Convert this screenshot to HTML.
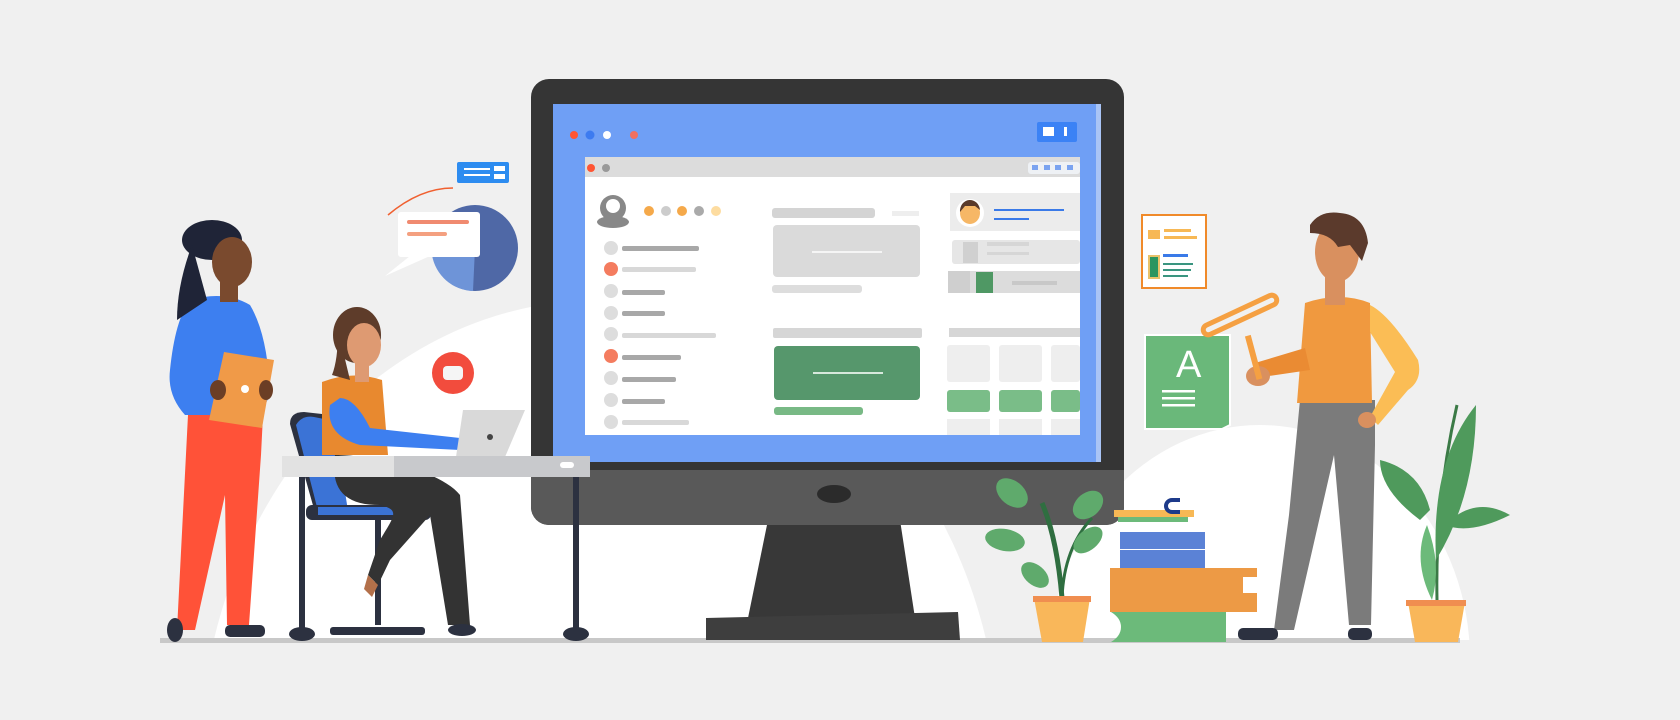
<!DOCTYPE html><html><head><style>html,body{margin:0;padding:0;background:#f0f0f0;width:1680px;height:720px;overflow:hidden}svg{display:block}</style></head><body>
<svg width="1680" height="720" viewBox="0 0 1680 720" xmlns="http://www.w3.org/2000/svg">
<defs><clipPath id="fl"><rect x="0" y="0" width="1680" height="640"/></clipPath></defs>
<rect width="1680" height="720" fill="#f0f0f0"/>
<g clip-path="url(#fl)">
<ellipse cx="600" cy="760" rx="400" ry="460" fill="#fff"/>
<ellipse cx="1260" cy="660" rx="210" ry="235" fill="#fff"/>
</g>
<!-- floor -->
<rect x="160" y="638" width="1300" height="5" fill="#c8c8c8"/>
<!-- monitor stand -->
<polygon points="768,520 900,520 915,618 748,618" fill="#383838"/>
<polygon points="706,618 958,612 960,640 706,640" fill="#3e3e3e"/>
<!-- monitor -->
<rect x="531" y="79" width="593" height="446" rx="18" fill="#353535"/>
<path d="M531,470 H1124 V507 a18,18 0 0 1 -18,18 H549 a18,18 0 0 1 -18,-18 Z" fill="#595959"/>
<ellipse cx="834" cy="494" rx="17" ry="9" fill="#2b2b2b"/>
<rect x="553" y="104" width="548" height="358" fill="#6f9ff5"/>
<rect x="1096" y="104" width="5" height="358" fill="#a9c4f5"/>
<circle cx="574" cy="135" r="4" fill="#ff5533"/><circle cx="590" cy="135" r="4.5" fill="#3d7bf0"/><circle cx="607" cy="135" r="4" fill="#fff"/><circle cx="634" cy="135" r="4" fill="#f07060"/>
<rect x="1037" y="122" width="40" height="20" rx="2" fill="#3b82f5"/><rect x="1043" y="127" width="11" height="9" fill="#fff"/><rect x="1064" y="127" width="3" height="9" fill="#fff"/>
<!-- inner window -->
<rect x="585" y="157" width="495" height="278" fill="#fff"/>
<rect x="585" y="157" width="495" height="20" fill="#dcdcdc"/>
<circle cx="591" cy="168" r="4" fill="#ff5533"/><circle cx="606" cy="168" r="4" fill="#999"/>
<rect x="1028" y="162" width="52" height="12" rx="3" fill="#eef1f5"/>
<rect x="1032" y="165" width="6" height="5" fill="#7aa3f0"/><rect x="1044" y="165" width="6" height="5" fill="#7aa3f0"/><rect x="1055" y="165" width="6" height="5" fill="#7aa3f0"/><rect x="1067" y="165" width="6" height="5" fill="#7aa3f0"/>
<circle cx="613" cy="208" r="13" fill="#888"/><ellipse cx="613" cy="222" rx="16" ry="6" fill="#888"/><circle cx="613" cy="206" r="7" fill="#fff"/>
<circle cx="649" cy="211" r="5" fill="#f5a94a"/><circle cx="666" cy="211" r="5" fill="#ccc"/><circle cx="682" cy="211" r="5" fill="#f5a94a"/><circle cx="699" cy="211" r="5" fill="#aaa"/><circle cx="716" cy="211" r="5" fill="#fddca0"/>
<g fill="#ddd"><circle cx="611" cy="248" r="7"/><circle cx="611" cy="291" r="7"/><circle cx="611" cy="313" r="7"/><circle cx="611" cy="334" r="7"/><circle cx="611" cy="378" r="7"/><circle cx="611" cy="400" r="7"/><circle cx="611" cy="422" r="7"/></g>
<circle cx="611" cy="269" r="7" fill="#f47c5f"/><circle cx="611" cy="356" r="7" fill="#f47c5f"/>
<g fill="#a8a8a8"><rect x="622" y="246" width="77" height="5" rx="2"/><rect x="622" y="290" width="43" height="5" rx="2"/><rect x="622" y="311" width="43" height="5" rx="2"/><rect x="622" y="355" width="59" height="5" rx="2"/><rect x="622" y="377" width="54" height="5" rx="2"/><rect x="622" y="399" width="43" height="5" rx="2"/></g>
<g fill="#d8d8d8"><rect x="622" y="267" width="74" height="5" rx="2"/><rect x="622" y="333" width="94" height="5" rx="2"/><rect x="622" y="420" width="67" height="5" rx="2"/></g>
<rect x="772" y="208" width="103" height="10" rx="3" fill="#d4d4d4"/><rect x="892" y="211" width="27" height="5" fill="#eee"/>
<rect x="773" y="225" width="147" height="52" rx="4" fill="#dadada"/><rect x="812" y="251" width="70" height="2" fill="#f5f5f5"/>
<rect x="772" y="285" width="90" height="8" rx="3" fill="#ddd"/>
<rect x="773" y="328" width="149" height="10" rx="2" fill="#d6d6d6"/>
<rect x="774" y="346" width="146" height="54" rx="4" fill="#56976c"/><rect x="813" y="372" width="70" height="2" fill="#d7e8dc"/>
<rect x="774" y="407" width="89" height="8" rx="3" fill="#78b985"/>
<rect x="950" y="193" width="130" height="38" fill="#ececec"/><circle cx="970" cy="213" r="14" fill="#fff"/><ellipse cx="970" cy="213" rx="10" ry="11" fill="#f6b766"/><path d="M960,212 a10,11 0 0 1 20,-2 l-5,-4 -10,0 z" fill="#5a3a2a"/>
<rect x="994" y="209" width="70" height="2" fill="#3a7ae8"/><rect x="994" y="218" width="35" height="2" fill="#3a7ae8"/>
<rect x="952" y="240" width="128" height="24" rx="3" fill="#e6e6e6"/><rect x="963" y="242" width="15" height="21" fill="#d0d0d0"/><rect x="987" y="242" width="42" height="4" fill="#d6d6d6"/><rect x="987" y="252" width="42" height="3" fill="#d6d6d6"/>
<rect x="948" y="271" width="132" height="22" fill="#dcdcdc"/><rect x="948" y="271" width="22" height="22" fill="#cfcfcf"/><rect x="976" y="272" width="17" height="21" fill="#4f9864"/><rect x="1012" y="281" width="45" height="4" fill="#c8c8c8"/>
<rect x="949" y="328" width="131" height="9" fill="#d6d6d6"/>
<g fill="#eeeeee"><rect x="947" y="345" width="43" height="37" rx="3"/><rect x="999" y="345" width="43" height="37" rx="3"/><rect x="1051" y="345" width="29" height="37" rx="3"/><rect x="947" y="419" width="43" height="16"/><rect x="999" y="419" width="43" height="16"/><rect x="1051" y="419" width="29" height="16"/></g>
<g fill="#7abd88"><rect x="947" y="390" width="43" height="22" rx="3"/><rect x="999" y="390" width="43" height="22" rx="3"/><rect x="1051" y="390" width="29" height="22" rx="3"/></g>
<!-- floating items left -->
<rect x="457" y="162" width="52" height="21" rx="2" fill="#2d8cf0"/><rect x="464" y="168" width="26" height="2" fill="#fff"/><rect x="464" y="174" width="26" height="2" fill="#fff"/><rect x="494" y="166" width="11" height="5" fill="#fff"/><rect x="494" y="174" width="11" height="5" fill="#fff"/>
<path d="M388,215 Q420,188 453,188" stroke="#f06030" stroke-width="1.5" fill="none"/>
<circle cx="475" cy="248" r="43" fill="#4f68a6"/><path d="M475,248 L473,291 A43,43 0 0 1 432,255 Z" fill="#6e94d8"/><path d="M475,248 L432,255 A43,43 0 0 1 440,224 Z" fill="#8fb5ee"/>
<rect x="398" y="212" width="82" height="45" rx="3" fill="#fff"/><polygon points="410,256 430,256 385,276" fill="#fff"/>
<rect x="407" y="220" width="62" height="4" rx="2" fill="#f08a70"/><rect x="407" y="232" width="40" height="4" rx="2" fill="#f4a080"/>
<circle cx="453" cy="373" r="21" fill="#f24c3d"/><rect x="443" y="366" width="20" height="14" rx="4" fill="#f5f5f5"/>
<!-- seated woman & desk -->
<path d="M290,424 q0,-12 14,-12 l18,2 l22,95 h-30 z" fill="#2c3140"/>
<path d="M296,425 q6,-10 18,-8 l20,4 l14,90 h-30 z" fill="#3b73d6"/>
<rect x="306" y="505" width="125" height="15" rx="6" fill="#2c3140"/><rect x="318" y="507" width="100" height="8" fill="#3b73d6"/>
<rect x="375" y="520" width="6" height="105" fill="#2c3140"/><rect x="330" y="627" width="95" height="8" rx="3" fill="#2c3140"/>
<path d="M335,455 C370,455 440,470 460,495 L470,625 L448,625 L430,515 L390,560 L378,585 L368,575 L380,540 C395,515 400,510 380,505 C345,505 330,490 335,455Z" fill="#333"/>
<path d="M368,575 l10,10 -6,12 -8,-8z" fill="#b3704a"/><ellipse cx="462" cy="630" rx="14" ry="6" fill="#2c3140"/>
<path d="M322,382 q30,-12 60,-2 l6,75 h-66 z" fill="#e8892f"/>
<ellipse cx="357" cy="335" rx="24" ry="28" fill="#5e3c2a"/><ellipse cx="364" cy="345" rx="17" ry="22" fill="#de9a72"/><rect x="355" y="360" width="14" height="22" fill="#de9a72"/>
<path d="M338,330 q0,30 -6,45 l18,5 z" fill="#5e3c2a"/>
<path d="M330,405 q-5,30 30,40 l100,5 0,-12 -90,-10 q-15,-30 -30,-30 z" fill="#3d7ff0"/>
<polygon points="463,410 525,410 505,457 456,457" fill="#d9d9d9"/><circle cx="490" cy="437" r="3" fill="#444"/>
<rect x="282" y="456" width="308" height="21" fill="#c8c9cc"/><rect x="282" y="456" width="112" height="21" fill="#e2e2e2"/><rect x="560" y="462" width="14" height="6" rx="3" fill="#fff"/>
<rect x="299" y="477" width="6" height="153" fill="#2c3140"/><rect x="573" y="477" width="6" height="153" fill="#2c3140"/>
<ellipse cx="302" cy="634" rx="13" ry="7" fill="#2c3140"/><ellipse cx="576" cy="634" rx="13" ry="7" fill="#2c3140"/>
<!-- standing woman -->
<path d="M188,415 l75,0 l-2,40 l-12,170 h-22 l-2,-130 l-30,135 h-18 z" fill="#ff5238"/>
<ellipse cx="175" cy="630" rx="8" ry="12" fill="#2c3140"/><rect x="225" y="625" width="40" height="12" rx="5" fill="#2c3140"/>
<path d="M190,300 q35,-10 60,5 q18,30 20,90 l-10,20 h-75 q-18,-20 -15,-45 q5,-50 20,-70z" fill="#3d7ff0"/>
<ellipse cx="212" cy="240" rx="30" ry="20" fill="#1f2437"/><path d="M192,245 q-15,40 -15,75 l30,-20 z" fill="#1f2437"/>
<ellipse cx="232" cy="262" rx="20" ry="25" fill="#7a4a2e"/><rect x="220" y="280" width="18" height="22" fill="#7a4a2e"/>
<polygon points="224,352 274,360 262,428 209,420" fill="#f09a48"/><circle cx="245" cy="389" r="4" fill="#fff"/>
<ellipse cx="218" cy="390" rx="8" ry="10" fill="#6b3e25"/><ellipse cx="266" cy="390" rx="7" ry="10" fill="#6b3e25"/>
<!-- right side -->
<rect x="1142" y="215" width="64" height="73" fill="#fff" stroke="#f08a2a" stroke-width="2"/>
<rect x="1148" y="230" width="12" height="9" fill="#f7b855"/><rect x="1164" y="229" width="27" height="3" fill="#f7b855"/><rect x="1164" y="236" width="33" height="3" fill="#f7b855"/>
<rect x="1149" y="256" width="10" height="22" fill="#2a9560" stroke="#e8c26a" stroke-width="2"/><rect x="1163" y="254" width="25" height="3" fill="#3a7ae8"/><rect x="1163" y="263" width="30" height="2" fill="#3a9580"/><rect x="1163" y="269" width="28" height="2" fill="#3a9580"/><rect x="1163" y="275" width="25" height="2" fill="#3a9580"/>
<path d="M1145,335 h85 v90 l-8,4 h-77z" fill="#6ab87a" stroke="#fff" stroke-width="2"/>
<text x="1176" y="377" font-family="Liberation Sans, sans-serif" font-size="38" fill="#fff">A</text>
<rect x="1162" y="390" width="33" height="2.5" fill="#fff"/><rect x="1162" y="397" width="33" height="2.5" fill="#fff"/><rect x="1162" y="404" width="33" height="2.5" fill="#fff"/>
<!-- plants -->
<path d="M1062,598 q-5,-60 -20,-95" stroke="#2f6e40" stroke-width="5" fill="none"/><path d="M1062,598 q2,-50 30,-80" stroke="#2f6e40" stroke-width="3" fill="none"/>
<g fill="#5faa6c"><ellipse cx="1012" cy="493" rx="18" ry="12" transform="rotate(40 1012 493)"/><ellipse cx="1088" cy="505" rx="17" ry="12" transform="rotate(-40 1088 505)"/><ellipse cx="1005" cy="540" rx="20" ry="11" transform="rotate(10 1005 540)"/><ellipse cx="1088" cy="540" rx="17" ry="10" transform="rotate(-40 1088 540)"/><ellipse cx="1035" cy="575" rx="16" ry="10" transform="rotate(40 1035 575)"/></g>
<polygon points="1034,598 1090,598 1083,642 1042,642" fill="#f9b75a"/><rect x="1033" y="596" width="58" height="6" fill="#f08e50"/>
<path d="M1437,600 q-2,-100 20,-195" stroke="#3b7a46" stroke-width="3" fill="none"/>
<g fill="#4f9a5c"><path d="M1436,560 q-5,-100 40,-155 q0,90 -40,155z"/><path d="M1420,520 q-40,-30 -40,-60 q40,10 50,50z"/><path d="M1445,525 q30,-30 65,-10 q-40,20 -65,10z"/><path d="M1432,600 q-20,-40 -5,-75 q15,40 5,75z" fill="#6cba7a"/></g>
<polygon points="1408,602 1465,602 1458,642 1415,642" fill="#f9b75a"/><rect x="1406" y="600" width="60" height="6" fill="#f08e50"/>
<!-- books -->
<path d="M1111,612 h115 v30 h-115 q10,-6 10,-15 q0,-9 -10,-15z" fill="#6cba7a"/>
<rect x="1110" y="568" width="147" height="44" fill="#ed9a45"/><rect x="1243" y="577" width="17" height="16" fill="#fff"/>
<rect x="1120" y="550" width="85" height="18" fill="#5b82d6"/><rect x="1120" y="532" width="85" height="17" fill="#5b82d6"/>
<path d="M1118,515 h70 v7 h-70z" fill="#6cba7a"/><path d="M1114,510 h80 v7 h-80z" fill="#f7b855"/><path d="M1180,500 h-8 a6,6 0 0 0 0,12 h8" stroke="#1d3a8a" stroke-width="4" fill="none"/>
<!-- man -->
<path d="M1300,400 h75 l0,45 l-4,180 h-22 l-15,-170 l-40,175 h-20 l15,-115 z" fill="#7b7b7b"/>
<rect x="1238" y="628" width="40" height="12" rx="5" fill="#2c3140"/><rect x="1348" y="628" width="24" height="12" rx="5" fill="#2c3140"/>
<path d="M1305,303 q35,-12 65,0 l2,100 h-75z" fill="#f0993f"/>
<path d="M1370,305 q20,10 48,55 q5,20 -10,30 l-30,35 -8,-8 25,-45 -25,-40z" fill="#fbbd55"/><ellipse cx="1367" cy="420" rx="9" ry="8" fill="#d9905f"/>
<path d="M1305,348 l-50,15 v15 l55,-8z" fill="#ea8b33"/><ellipse cx="1258" cy="376" rx="12" ry="10" fill="#d9905f"/>
<rect x="1250" y="335" width="6" height="45" fill="#f5a042" transform="rotate(-15 1253 355)"/>
<rect x="1200" y="310" width="80" height="10" rx="5" fill="none" stroke="#f5a042" stroke-width="5" transform="rotate(-25 1240 315)"/>
<ellipse cx="1337" cy="252" rx="22" ry="30" fill="#d9905f"/><rect x="1325" y="270" width="20" height="35" fill="#d9905f"/>
<path d="M1310,225 q10,-15 30,-12 q25,2 28,30 l-6,18 -12,-16 -12,2 q-8,-14 -28,-14z" fill="#5b3a2c"/>
</svg>
</body></html>
